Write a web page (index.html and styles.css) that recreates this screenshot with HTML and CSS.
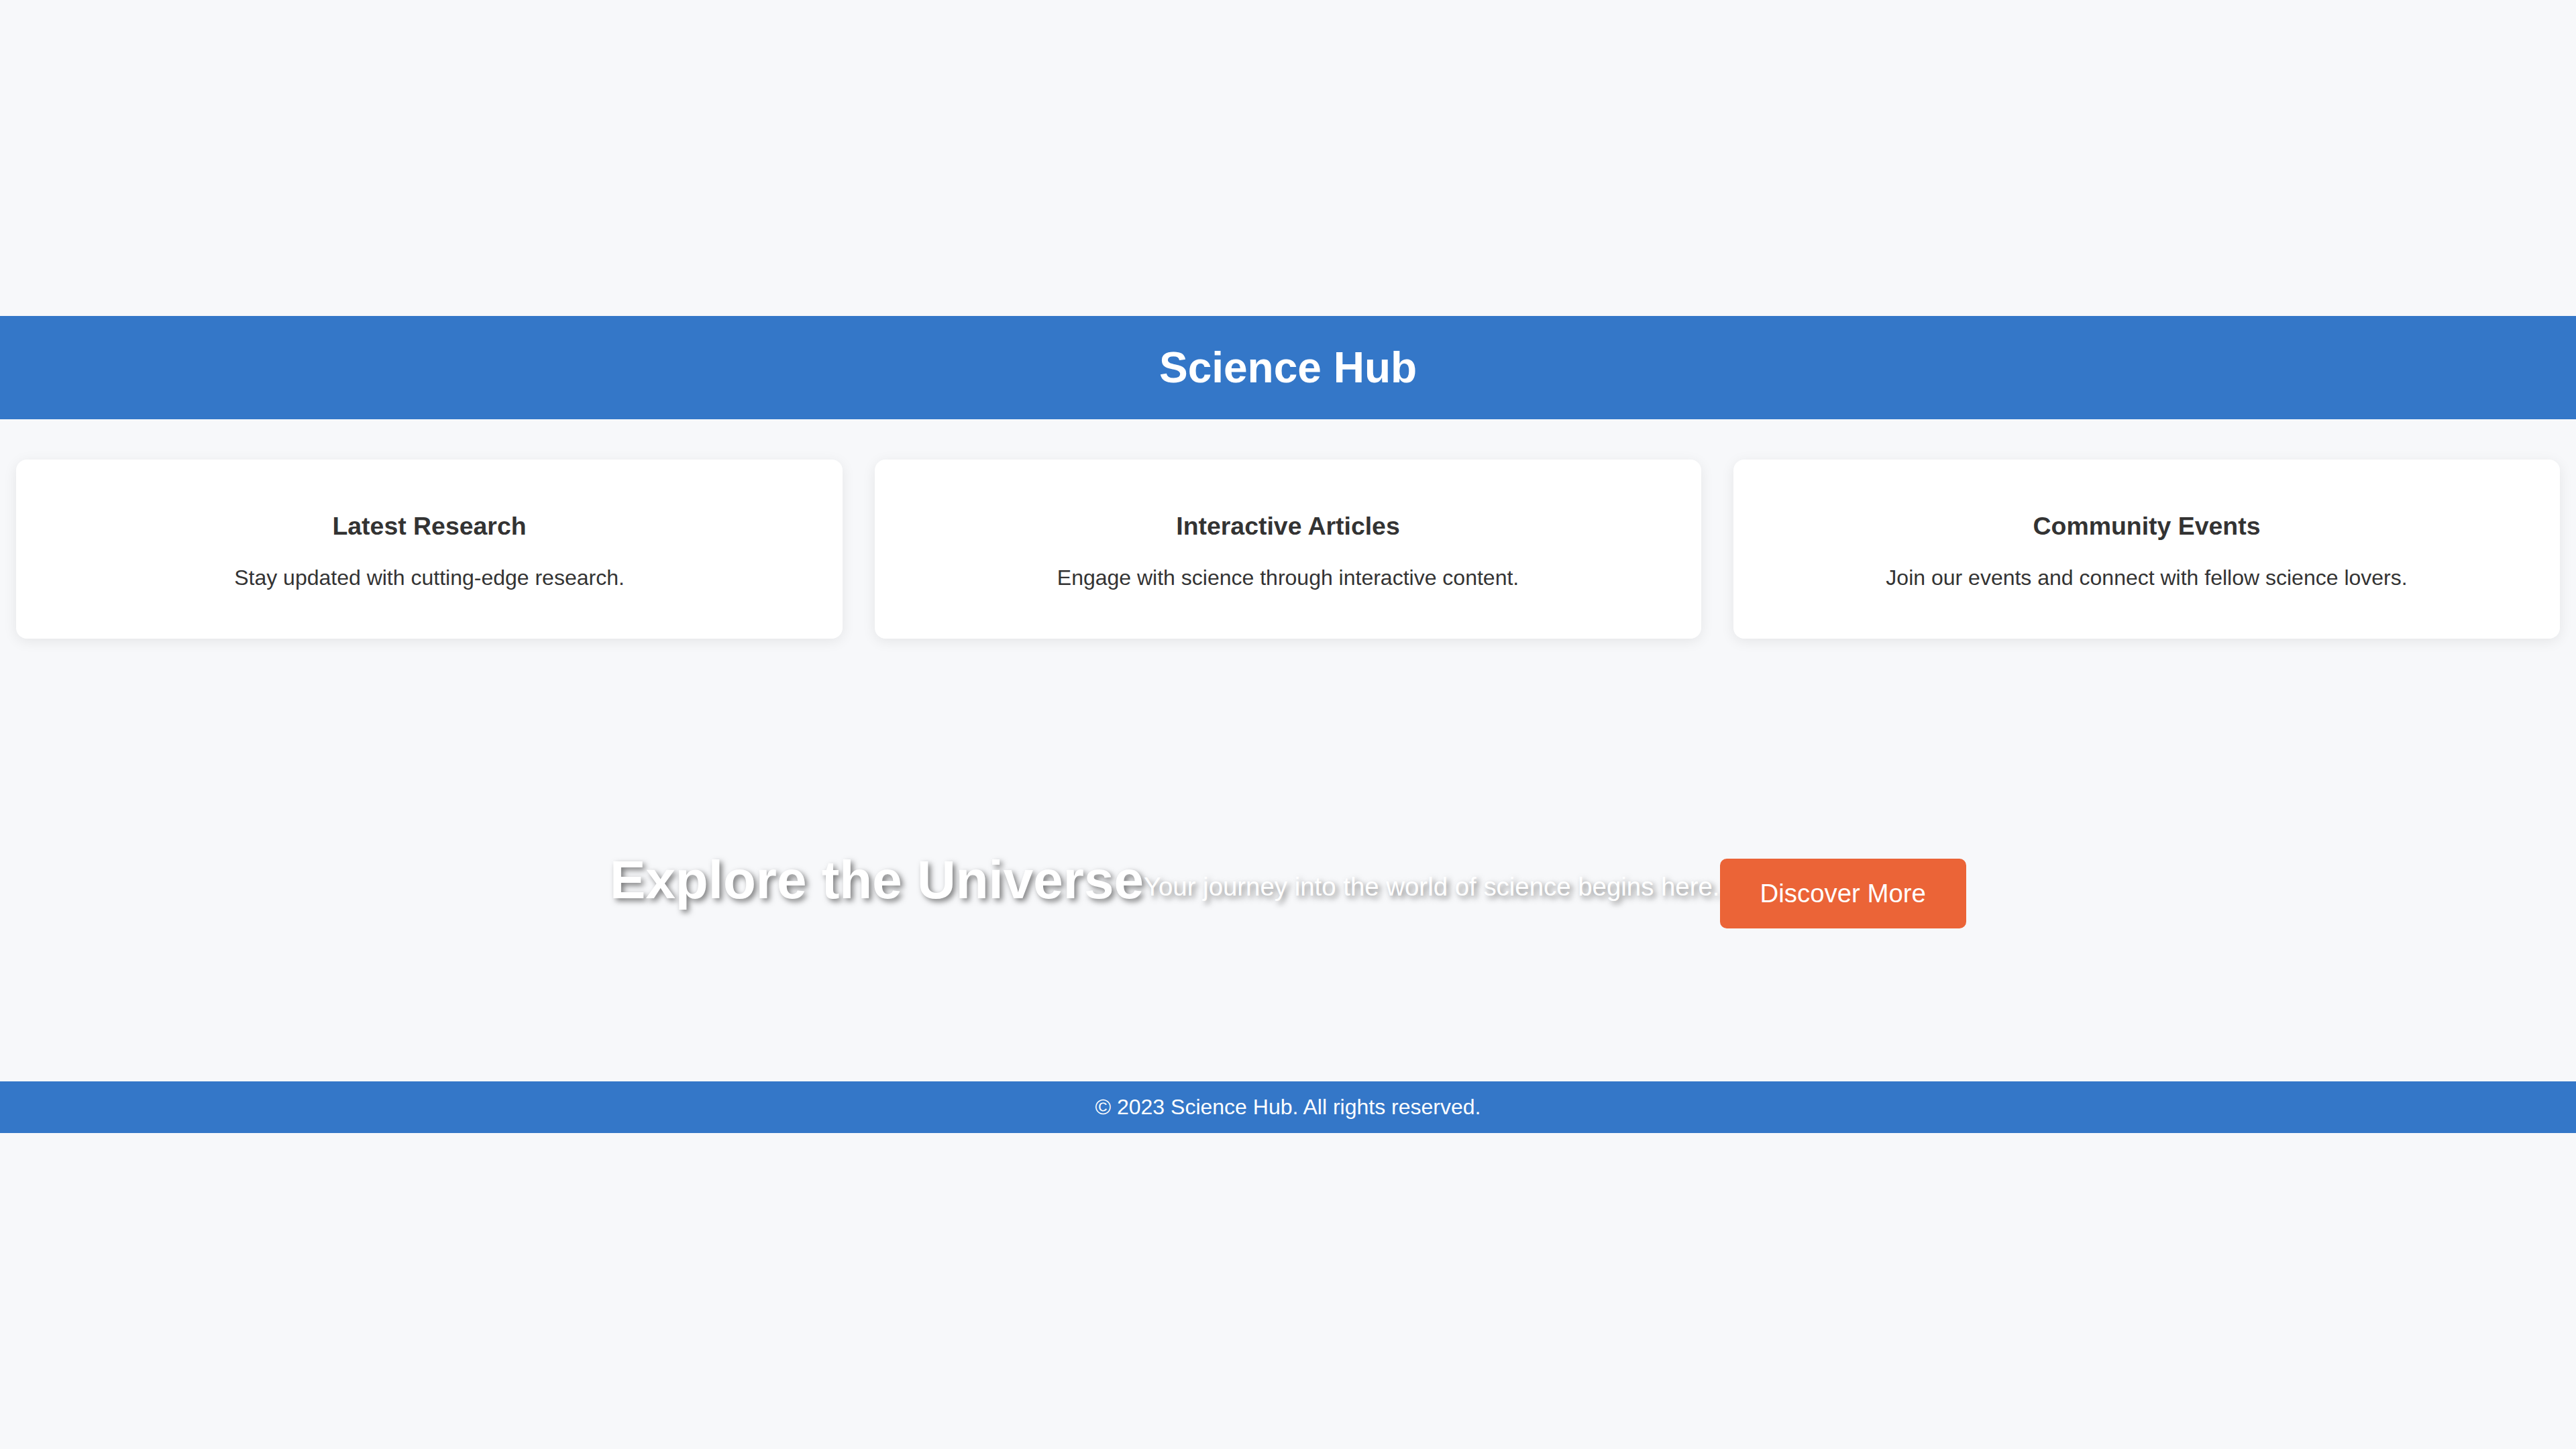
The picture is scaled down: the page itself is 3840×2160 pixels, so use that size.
FILE: index.html
```html
<!DOCTYPE html>
<html lang="en">
<head>
<meta charset="utf-8">
<title>Science Hub</title>
<link rel="stylesheet" href="styles.css">
</head>
<body>
  <header class="site-header">
    <h1 class="site-title">Science Hub</h1>
  </header>
  <section class="features">
    <div class="card">
      <h3 class="card-title">Latest Research</h3>
      <p class="card-text">Stay updated with cutting-edge research.</p>
    </div>
    <div class="card">
      <h3 class="card-title">Interactive Articles</h3>
      <p class="card-text">Engage with science through interactive content.</p>
    </div>
    <div class="card">
      <h3 class="card-title">Community Events</h3>
      <p class="card-text">Join our events and connect with fellow science lovers.</p>
    </div>
  </section>
  <section class="hero">
    <h2 class="hero-title">Explore the Universe</h2>
    <p class="hero-sub">Your journey into the world of science begins here.</p>
    <button class="hero-btn">Discover More</button>
  </section>
  <footer class="site-footer">
    <p class="footer-text">&copy; 2023 Science Hub. All rights reserved.</p>
  </footer>
</body>
</html>
```

FILE: styles.css
```css
html, body {
  margin: 0;
  padding: 0;
}

body {
  min-height: 100vh;
  display: flex;
  flex-direction: column;
  justify-content: center;
  background: #f7f8fa;
  font-family: "Liberation Sans", Arial, sans-serif;
  font-size: 32px;
  color: #333333;
}

.site-header {
  background: #3477c8;
  color: #ffffff;
  text-align: center;
  padding: 40px 0;
}

.site-title {
  margin: 0;
  font-size: 64px;
  line-height: 74px;
  font-weight: bold;
}

.features {
  display: grid;
  grid-template-columns: repeat(3, 1fr);
  gap: 48px;
  padding: 60px 24px;
}

.card {
  background: #ffffff;
  border-radius: 16px;
  box-shadow: 0 4px 20px rgba(0, 0, 0, 0.08);
  padding: 40px;
  text-align: center;
}

.card-title {
  font-size: 37.44px;
  margin: 37.44px 0;
  font-weight: bold;
  color: #333333;
}

.card-text {
  margin: 32px 0;
  font-size: 32px;
  color: #333333;
}

.hero {
  height: 600px;
  display: flex;
  flex-direction: row;
  justify-content: center;
  align-items: center;
  color: #ffffff;
}

.hero-title {
  margin: 0;
  font-size: 80px;
  font-weight: bold;
  text-shadow: 4px 4px 8px rgba(0, 0, 0, 0.5);
}

.hero-sub {
  margin: 20px 0 0;
  font-size: 38.4px;
  text-shadow: 4px 4px 8px rgba(0, 0, 0, 0.5);
}

.hero-btn {
  margin: 40px 0 0;
  font-family: "Liberation Sans", Arial, sans-serif;
  font-size: 38.4px;
  color: #ffffff;
  background: #eb6437;
  border: none;
  border-radius: 10px;
  padding: 30px 60px;
  cursor: pointer;
}

.site-footer {
  background: #3477c8;
  color: #ffffff;
  text-align: center;
  padding: 20px 0;
}

.footer-text {
  margin: 0;
  font-size: 32px;
}
```
